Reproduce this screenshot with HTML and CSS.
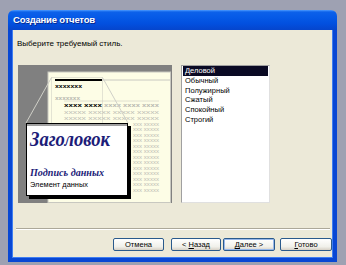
FILE: index.html
```html
<!DOCTYPE html>
<html lang="ru">
<head>
    <meta charset="UTF-8">
    <title>Создание отчетов</title>
    <link rel="stylesheet" href="styles.css">
</head>
<body>
    <div class="window">
        <div class="titlebar">Создание отчетов</div>
        <div class="client">
            <div class="hint">Выберите требуемый стиль.</div>
            <div class="main">
                <div class="preview">
                    <svg width="154" height="138" viewBox="0 0 154 138">
                        <rect x="0" y="0" width="154" height="138" fill="#808080"/>
                        <rect x="30" y="7" width="122.5" height="130.5" fill="#fdfde6" stroke="#c8c8c0"/>
                        <!-- шапка страницы -->
                        <line x1="84" y1="15" x2="152" y2="15" stroke="#c8c8c0"/>
                        <rect x="37" y="14" width="47" height="2" fill="#000"/>
                        <text x="37" y="23" class="xs-bold" textLength="27" lengthAdjust="spacingAndGlyphs">xxxxxxx</text>
                        <text x="37" y="35" class="xs-gray" textLength="25" lengthAdjust="spacingAndGlyphs">xxxxxxx</text>
                        <line x1="46" y1="36" x2="141" y2="36" stroke="#e0e0d0"/>
                        <text x="46" y="42" class="xs-bold" textLength="38" lengthAdjust="spacingAndGlyphs">xxxx xxxx</text>
                        <text x="86" y="42" class="xs-gray" textLength="55" lengthAdjust="spacingAndGlyphs">xxxx xxxx xxxx</text>
                        <g class="xs-rows">
                            <text x="46" y="49" textLength="95" lengthAdjust="spacingAndGlyphs">xxxxx xxxxx xxxxx xxxxx</text>
                            <text x="46" y="55" textLength="95" lengthAdjust="spacingAndGlyphs">xxxxx xxxxx xxxxx xxxxx</text>
                            <!-- строки за карточкой видны только справа от неё -->
                            <text x="115" y="60.5" textLength="26" lengthAdjust="spacingAndGlyphs">xxx xxxxx</text>
                            <text x="115" y="66" textLength="26" lengthAdjust="spacingAndGlyphs">xxx xxxxx</text>
                            <text x="115" y="71.5" textLength="26" lengthAdjust="spacingAndGlyphs">xxx xxxxx</text>
                            <text x="115" y="77" textLength="26" lengthAdjust="spacingAndGlyphs">xxx xxxxx</text>
                            <text x="115" y="82.5" textLength="26" lengthAdjust="spacingAndGlyphs">xxx xxxxx</text>
                            <text x="115" y="88" textLength="26" lengthAdjust="spacingAndGlyphs">xxx xxxxx</text>
                            <text x="115" y="93.5" textLength="26" lengthAdjust="spacingAndGlyphs">xxx xxxxx</text>
                            <text x="115" y="99" textLength="26" lengthAdjust="spacingAndGlyphs">xxx xxxxx</text>
                            <text x="115" y="104.5" textLength="26" lengthAdjust="spacingAndGlyphs">xxx xxxxx</text>
                            <text x="115" y="110" textLength="26" lengthAdjust="spacingAndGlyphs">xxx xxxxx</text>
                            <text x="115" y="115.5" textLength="26" lengthAdjust="spacingAndGlyphs">xxx xxxxx</text>
                            <text x="115" y="121" textLength="26" lengthAdjust="spacingAndGlyphs">xxx xxxxx</text>
                            <text x="115" y="126.5" textLength="26" lengthAdjust="spacingAndGlyphs">xxx xxxxx</text>
                        </g>
                        <!-- лупа -->
                        <rect x="33.5" y="12.5" width="51" height="47" fill="none" stroke="#c8c8c0" stroke-dasharray="1 1"/>
                        <line x1="8" y1="58" x2="33.5" y2="12.5" stroke="#d0d0c8"/>
                        <line x1="110" y1="58" x2="84.5" y2="12.5" stroke="#d0d0c8"/>
                        <!-- карточка -->
                        <rect x="11" y="61" width="102" height="73" fill="#000"/>
                        <rect x="8.5" y="58.5" width="101" height="72" fill="#fff" stroke="#000"/>
                        <rect x="9" y="59" width="100" height="2" fill="#a0a0a0"/>
                        <text x="12" y="81" class="card-title" textLength="80" lengthAdjust="spacingAndGlyphs">Заголовок</text>
                        <text x="12" y="111" class="card-caption" textLength="74" lengthAdjust="spacingAndGlyphs">Подпись данных</text>
                        <text x="12" y="122" class="card-item" textLength="58" lengthAdjust="spacingAndGlyphs">Элемент данных</text>
                    </svg>
                </div>
                <ul class="styles">
                    <li class="selected">Деловой</li>
                    <li>Обычный</li>
                    <li>Полужирный</li>
                    <li>Сжатый</li>
                    <li>Спокойный</li>
                    <li>Строгий</li>
                </ul>
            </div>
            <div class="separator"></div>
            <div class="buttons">
                <button class="btn btn-cancel">Отмена</button>
                <button class="btn btn-back">&lt; <u>Н</u>азад</button>
                <button class="btn btn-next default"><u>Д</u>алее &gt;</button>
                <button class="btn btn-done"><u>Г</u>отово</button>
            </div>
        </div>
    </div>
</body>
</html>
```

FILE: styles.css
```css
*{
    box-sizing: border-box;
}
body{
    margin: 0;
    background-color: #9ea1b2;
    font-family: "Liberation Sans", Arial, sans-serif;
    font-size: 8px;
    color: #000;
}
.window{
    margin: 10px 0 0 8px;
    width: 329px;
    height: 252px;
    display: flex;
    flex-direction: column;
}
.titlebar{
    height: 20px;
    line-height: 20px;
    padding-left: 5px;
    border-radius: 6px 6px 0 0;
    background: linear-gradient(#4d9bff 0, #0c61ea 2px, #0559e6 8px, #024fde 14px, #0545cc 20px);
    color: #fff;
    font-weight: bold;
    font-size: 9.5px;
    letter-spacing: -0.2px;
    text-shadow: 1px 1px 0 #0a2a90;
}
.client{
    flex: 1;
    display: flex;
    flex-direction: column;
    background-color: #ece9d8;
    border: 4px solid #0847d4;
    border-top: 0;
    box-shadow: inset 1px 0 0 #3f7ef0, inset -1px 0 0 #3f7ef0, inset 0 -1px 0 #3f7ef0;
}
.hint{
    margin-top: 8px;
    padding-left: 5px;
    height: 11px;
    line-height: 11px;
}
.main{
    margin-top: 16px;
    margin-left: 6px;
    display: flex;
    gap: 9px;
    height: 138px;
}
.preview{
    width: 154px;
    height: 138px;
}
.preview svg{
    display: block;
}
.xs-bold{
    font-family: "Liberation Sans", sans-serif;
    font-size: 6px;
    font-weight: bold;
    fill: #000;
}
.xs-gray{
    font-family: "Liberation Sans", sans-serif;
    font-size: 6px;
    font-weight: bold;
    fill: #b8b8b0;
}
.xs-rows{
    font-family: "Liberation Sans", sans-serif;
    font-size: 5px;
    fill: #bcbcb4;
}
.card-title{
    font-family: "Liberation Serif", serif;
    font-size: 20px;
    font-weight: bold;
    font-style: italic;
    fill: #1c1c78;
}
.card-caption{
    font-family: "Liberation Serif", serif;
    font-size: 11px;
    font-weight: bold;
    font-style: italic;
    fill: #1c1c78;
}
.card-item{
    font-family: "Liberation Sans", sans-serif;
    font-size: 8px;
    fill: #000;
}
.styles{
    margin: 0;
    padding: 0 1px;
    list-style: none;
    width: 89px;
    height: 138px;
    background-color: #fff;
    border: 1px solid #a0a0a0;
    border-right-color: #e0e0e0;
    border-bottom-color: #e0e0e0;
    font-size: 7.5px;
}
.styles li{
    height: 9.8px;
    line-height: 9.8px;
    padding-left: 2px;
}
.styles .selected{
    background-color: #0a0a24;
    color: #fff;
}
.separator{
    margin: 25px 3px 0 4px;
    height: 2px;
    border-top: 1px solid #aca899;
    border-bottom: 1px solid #fff;
}
.buttons{
    margin-top: 8px;
    display: flex;
    padding-left: 101px;
}
.btn{
    height: 13px;
    padding: 0;
    font-family: "Liberation Sans", Arial, sans-serif;
    font-size: 7.5px;
    line-height: 11px;
    color: #000;
    border: 1px solid #2a5a8c;
    border-radius: 2px;
    background: linear-gradient(#ffffff, #f0f0ea 70%, #d6d0c5);
}
.btn u{
    text-decoration: underline;
}
.btn-cancel{
    width: 51px;
}
.btn-back{
    width: 50px;
    margin-left: 7px;
}
.btn-next{
    width: 52px;
    margin-left: 2px;
}
.btn-done{
    width: 52px;
    margin-left: 5px;
}
.default{
    box-shadow: inset 0 0 0 1px #98b8ea;
}
```
